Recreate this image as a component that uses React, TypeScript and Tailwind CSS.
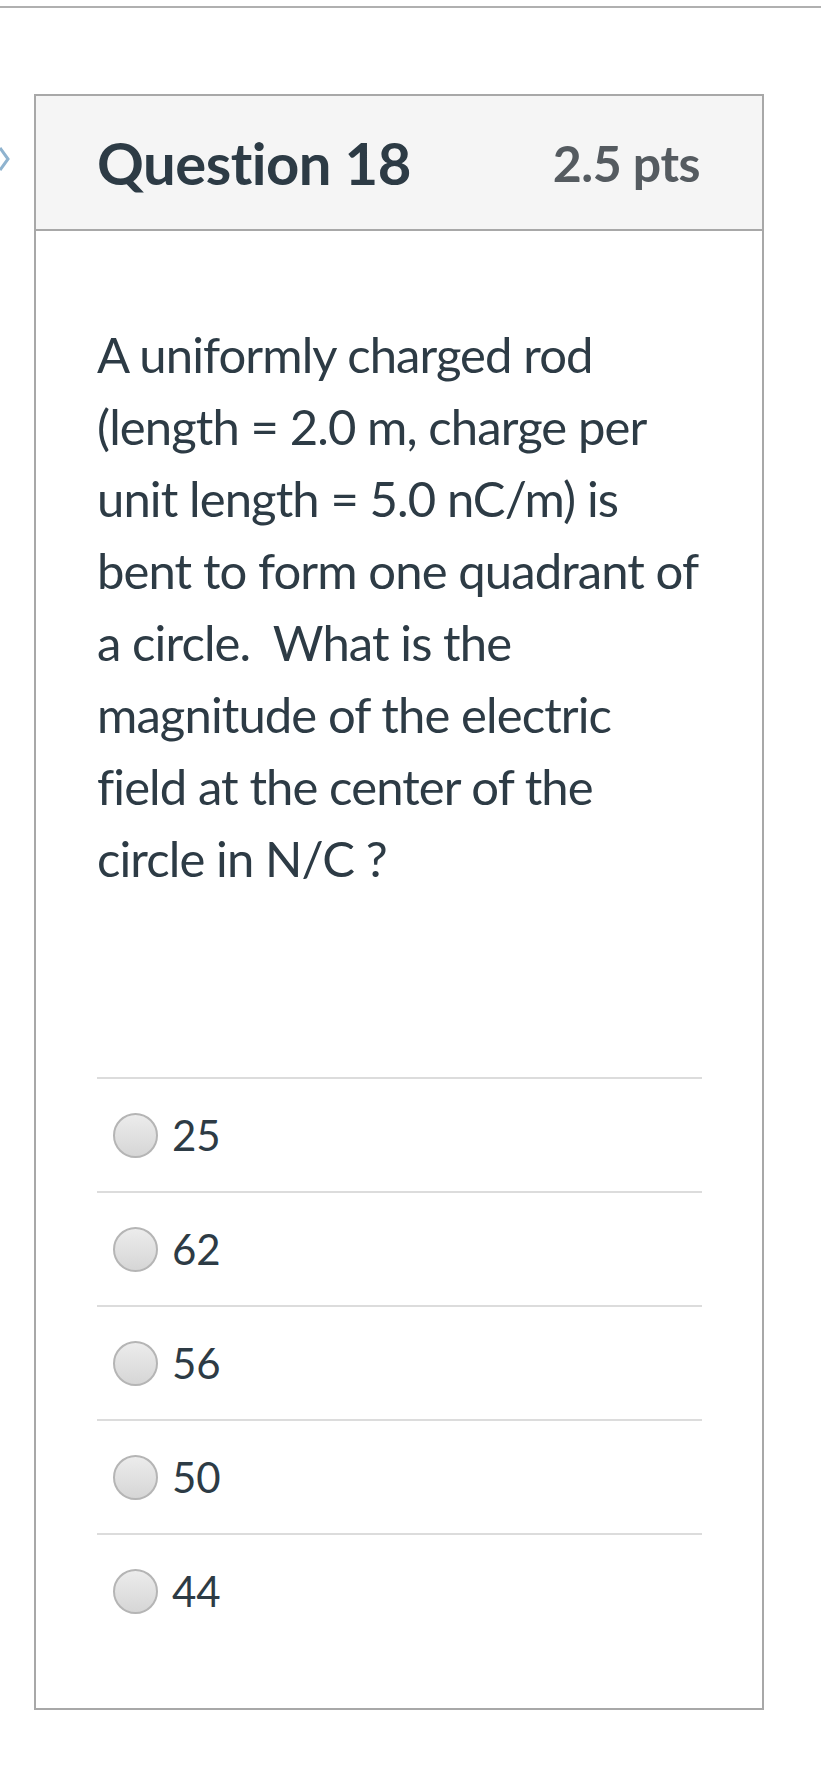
const OPTIONS = ["25", "62", "56", "50", "44"];

const QUESTION_LINES = [
  "A uniformly charged rod",
  "(length = 2.0 m, charge per",
  "unit length = 5.0 nC/m) is",
  "bent to form one quadrant of",
  "a circle.\u00a0 What is the",
  "magnitude of the electric",
  "field at the center of the",
  "circle in N/C ?",
];

function Radio() {
  return (
    <span className="block w-[45px] h-[45px] rounded-full border-2 border-[#b5b5b5] bg-gradient-to-b from-[#ececec] to-[#d6d6d6] shrink-0" />
  );
}

export default function App() {
  return (
    <div className="min-h-[1778px] bg-white font-['Lato','Open_Sans',sans-serif] text-[#2d3b45] relative">
      {/* top rule */}
      <div className="pt-[6px]">
        <div className="h-[2px] bg-[#b0b0b0]" />
      </div>

      {/* blue chevron peeking from the left edge */}
      <svg className="absolute left-0 top-[146px]" width="10" height="26" viewBox="0 0 10 26">
        <path d="M0 2 L8 13 L0 24" fill="none" stroke="#8fb3cf" strokeWidth="3" />
      </svg>

      <div className="mt-[86px] ml-[34px] w-[730px] border-2 border-[#a8a8a8]">
        {/* Header */}
        <div className="h-[135px] bg-[#f5f5f5] border-b-2 border-[#a8a8a8] flex items-center justify-between pl-[61px] pr-[62px]">
          <h2 className="text-[58px] font-bold tracking-[-0.5px] leading-none">Question 18</h2>
          <span className="text-[50px] font-bold text-[#555b60] tracking-[-0.5px] leading-none">2.5 pts</span>
        </div>

        {/* Body */}
        <div className="pl-[61px] pr-[40px] pt-[87px] pb-[61px]">
          <div className="text-[49px] tracking-[-0.9px] leading-[72px]">
            {QUESTION_LINES.map((l, i) => (
              <div key={i} className="whitespace-pre">{l}</div>
            ))}
          </div>

          <div className="mt-[183px] mr-[20px]">
            {OPTIONS.map((o) => (
              <div key={o} className="border-t-2 border-[#dcdcdc]">
                <label className="h-[112px] flex items-center gap-[14px] pl-[16px]">
                  <Radio />
                  <span className="text-[42px] leading-none">{o}</span>
                </label>
              </div>
            ))}
          </div>
        </div>
      </div>
    </div>
  );
}
